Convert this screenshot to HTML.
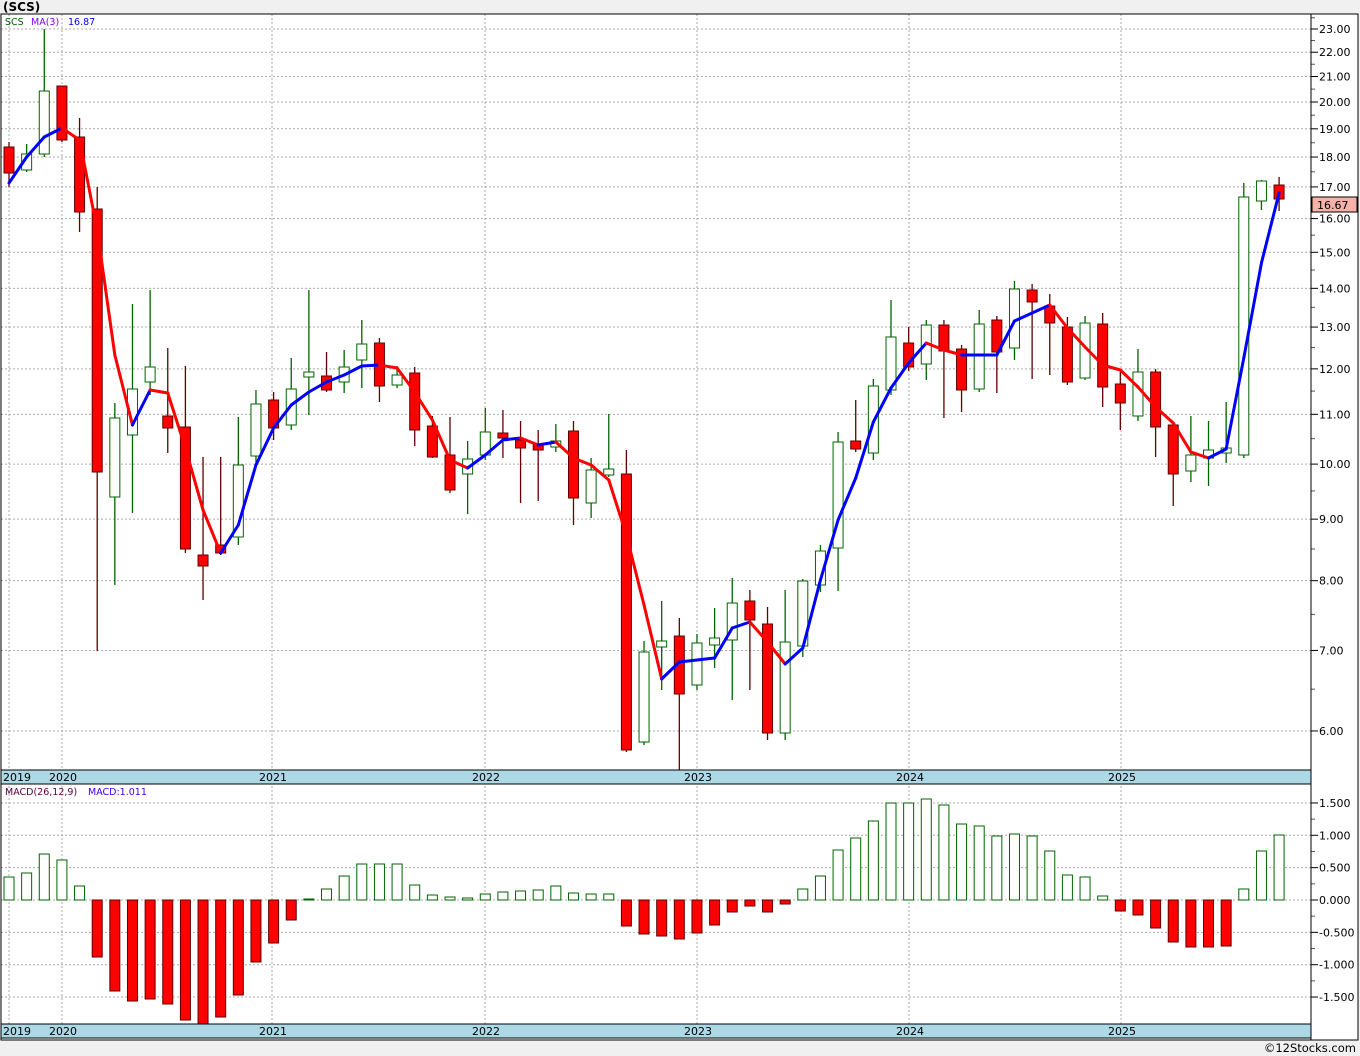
<!DOCTYPE html>
<html><head><meta charset="utf-8">
<style>
html,body{margin:0;padding:0;background:#f0f0f0;width:1360px;height:1056px;overflow:hidden;font-family:Tahoma,"DejaVu Sans","Liberation Sans",sans-serif;}
svg{position:absolute;left:0;top:0;}
</style></head>
<body>
<svg id="c" width="1360" height="1056" xmlns="http://www.w3.org/2000/svg" font-family="'DejaVu Sans','Liberation Sans',sans-serif">
<rect x="0" y="0" width="1360" height="1056" fill="#f0f0f0"/>
<rect x="1" y="14" width="1357" height="1026" fill="#fff"/>
<text x="3" y="11" font-size="12" font-weight="bold" fill="#000">(SCS)</text>
<text x="1356" y="1052" font-size="11.5" fill="#000" text-anchor="end">©12Stocks.com</text>
<g id="g"></g>
</svg>
<script>
var g=document.getElementById('g');var s='';
function Y(p){return 29+(Math.log(23)-Math.log(p))*522.4;}
function M(v){return 900-v*64.7;}
var years=[[3,'2019',0],[62,'2020',1],[272,'2021',1],[485,'2022',1],[697,'2023',1],[909,'2024',1],[1121,'2025',1]];
for(var p=6;p<=23;p++){var y=Y(p);s+='<line x1="1" x2="1311" y1="'+y+'" y2="'+y+'" stroke="#aaa" stroke-dasharray="2,2"/>';
s+='<line x1="1311" x2="1318" y1="'+y+'" y2="'+y+'" stroke="#000"/>';
s+='<text x="1319" y="'+(y+4)+'" font-size="11" fill="#000">'+p.toFixed(2)+'</text>';
var y2=Y(p+0.5);s+='<line x1="1311" x2="1315" y1="'+y2+'" y2="'+y2+'" stroke="#555"/>';}
var mv=[1.5,1,0.5,0,-0.5,-1,-1.5];
mv.forEach(function(v){var y=M(v);s+='<line x1="1" x2="1311" y1="'+y+'" y2="'+y+'" stroke="#aaa" stroke-dasharray="2,2"/>';
s+='<line x1="1311" x2="1318" y1="'+y+'" y2="'+y+'" stroke="#000"/>';
s+='<text x="1319" y="'+(y+4)+'" font-size="11" fill="#000">'+(v<0?'':' ')+v.toFixed(3)+'</text>';
var y2=M(v+0.25);if(v<1.5)s+='<line x1="1311" x2="1315" y1="'+y2+'" y2="'+y2+'" stroke="#555"/>';});
years.forEach(function(a){var x=a[0]==3?9:a[0];s+='<line x1="'+x+'" x2="'+x+'" y1="14" y2="1024" stroke="#aaa" stroke-dasharray="2,2"/>';});
var C=[[147,173,142,187],[170,154,144,172],[154,91,29,157],[86,140,86,142],[137,212,118,232],[209,472,187,651],[497,418,403,585],[435,389,304,513],[382,367,290,395],[416,428,348,453],[427,549,366,553],[555,566,457,600],[545,553,457,555],[537,465,417,545],[456,404,390,467],[400,428,392,440],[425,389,358,430],[377,372,290,415],[376,390,352,392],[382,367,350,393],[360,344,320,388],[343,386,338,402],[385,375,366,388],[373,430,367,446],[426,457,416,458],[455,490,417,493],[474,459,441,514],[455,432,408,460],[433,438,410,458],[440,448,421,503],[444,450,430,501],[447,441,424,452],[431,498,421,525],[503,470,458,518],[475,469,414,477],[474,750,450,752],[742,652,641,745],[647,641,601,690],[636,694,618,770],[685,643,634,690],[645,638,608,668],[640,603,578,700],[601,620,590,690],[624,733,607,740],[733,642,590,740],[646,581,579,657],[585,551,545,592],[548,442,432,591],[441,449,400,452],[453,386,379,460],[390,337,300,395],[343,367,327,371],[364,325,320,380],[325,351,320,418],[349,390,345,412],[389,324,310,392],[320,352,316,393],[348,289,281,360],[290,302,284,379],[306,323,294,375],[327,382,317,385],[378,323,316,380],[324,387,313,407],[384,403,372,430],[416,372,349,421],[372,427,369,457],[425,474,422,506],[471,455,416,482],[458,450,421,486],[453,448,402,463],[455,197,183,458],[201,181,180,210],[185,199,177,211]];
function X(i){return 9+i*17.64;}
C.forEach(function(c,i){var x=X(i);var red=c[1]>c[0];var col=red?'#600000':'#006400';
var t=Math.min(c[0],c[1]),b=Math.max(c[0],c[1]);
s+='<line x1="'+x+'" x2="'+x+'" y1="'+c[2]+'" y2="'+c[3]+'" stroke="'+col+'" stroke-width="1.3"/>';
s+='<rect x="'+(x-5)+'" y="'+t+'" width="10" height="'+Math.max(b-t,2)+'" fill="'+(red?'#ff0000':'#fff')+'" stroke="'+col+'" stroke-width="1"/>';});
var P=[183,157,137,128,140,230,355,425,390,393,448,510,553,525,465,428,405,392,382,375,366,365,368,392,420,460,468,455,440,438,445,442,458,465,480,535,605,679,662,660,658,628,622,642,664,648,580,520,478,422,388,363,343,350,355,355,355,321,313,305,328,347,365,370,387,407,423,452,458,449,358,263,193];
for(var i=0;i<72;i++){var col=P[i+1]<=P[i]?'#0000ff':'#ff0000';
s+='<line x1="'+X(i)+'" y1="'+P[i]+'" x2="'+X(i+1)+'" y2="'+P[i+1]+'" stroke="'+col+'" stroke-width="3" stroke-linecap="round"/>';}
var H=[877,873,854,860,886,957,991,1001,999,1004,1020,1024,1017,995,962,943,920,899,889,876,864,864,864,885,895,897,898,894,892,891,890,886,893,894,894,926,934,936,939,933,925,912,906,912,904,889,876,850,838,821,803,803,799,805,824,826,836,834,836,851,875,877,896,911,915,928,942,947,947,946,889,851,835];
H.forEach(function(h,i){var x=X(i);if(h>900){s+='<rect x="'+(x-5)+'" y="900" width="10" height="'+(h-900)+'" fill="#ff0000" stroke="#600000"/>';}
else{s+='<rect x="'+(x-5)+'" y="'+h+'" width="10" height="'+Math.max(900-h,1)+'" fill="#fff" stroke="#006400"/>';}});
[770,1024].forEach(function(y){s+='<rect x="1" y="'+y+'" width="1310" height="14" fill="#add8e6" stroke="#000"/>';
years.forEach(function(a){s+='<text x="'+(a[0]==3?3:a[0]-13)+'" y="'+(y+11)+'" font-size="11" fill="#000">'+a[1]+'</text>';});});
s+='<rect x="1" y="14" width="1357" height="1026" fill="none" stroke="#000"/>';
s+='<line x1="1311" x2="1311" y1="14" y2="1040" stroke="#000"/>';
s+='<rect x="1312" y="197" width="45" height="15" fill="#f7b2a8" stroke="#000"/>';
s+='<text x="1317" y="209" font-size="11" fill="#000">16.67</text>';
s+='<text x="5" y="25" font-size="9.5" fill="#006400">SCS</text><text x="31" y="25" font-size="9.5" fill="#8000ff">MA(3)</text><text x="68" y="25" font-size="9.5" fill="#0000ff">16.87</text>';
s+='<text x="5" y="795" font-size="9.5" fill="#600040">MACD(26,12,9)</text><text x="88" y="795" font-size="9.5" fill="#4000ff">MACD:1.011</text>';
g.innerHTML=s;
</script>
</body></html>
